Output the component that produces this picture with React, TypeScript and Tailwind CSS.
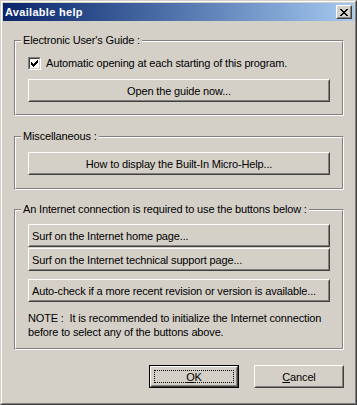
import React from 'react';

const font = "font-['Liberation_Sans',Arial,sans-serif]";

interface BtnProps {
  children: React.ReactNode;
  className?: string;
  align?: 'center' | 'left';
}

const Btn: React.FC<BtnProps> = ({ children, className = '', align = 'center' }) => (
  <div className={`h-[23px] border border-t-white border-l-white border-r-[#404040] border-b-[#404040] ${className}`}>
    <div
      className={`h-full flex items-center border border-t-[#d4d0c8] border-l-[#d4d0c8] border-r-[#808080] border-b-[#808080] leading-[14px] ${
        align === 'center' ? 'justify-center' : 'justify-start pl-[2px]'
      }`}
    >
      {children}
    </div>
  </div>
);

interface GroupProps {
  label: string;
  children: React.ReactNode;
  className?: string;
}

const Group: React.FC<GroupProps> = ({ label, children, className = '' }) => (
  <div className={`relative border border-t-[#808080] border-l-[#808080] border-r-white border-b-white ${className}`}>
    <span className="absolute left-[6px] top-[-8px] px-[2px] bg-[#d4d0c8] leading-[14px] whitespace-nowrap">
      {label}
    </span>
    <div className="border border-t-white border-l-white border-r-[#808080] border-b-[#808080] px-[12px]">
      {children}
    </div>
  </div>
);

const App: React.FC = () => {
  return (
    <div className={`w-[357px] h-[405px] bg-[#d4d0c8] text-[11px] tracking-[-0.15px] text-black ${font} border border-t-[#d4d0c8] border-l-[#d4d0c8] border-r-[#404040] border-b-[#404040]`}>
      <div className="h-full flex flex-col p-px border border-t-white border-l-white border-r-[#808080] border-b-[#808080]">
        {/* title bar */}
        <div className="h-[18px] flex items-center bg-gradient-to-r from-[#0a246a] to-[#a6caf0] pl-[2px] pr-[2px]">
          <span className="flex-1 text-white font-bold tracking-[0.3px] leading-[18px] whitespace-nowrap">Available help</span>
          <div className="w-[16px] h-[14px] border border-t-white border-l-white border-r-[#404040] border-b-[#404040] bg-[#d4d0c8]">
            <div className="h-full flex items-center justify-center border border-t-[#d4d0c8] border-l-[#d4d0c8] border-r-[#808080] border-b-[#808080]">
              <svg width="8" height="7" viewBox="0 0 8 7" shapeRendering="crispEdges">
                <path d="M0 0h2v1h-2zM6 0h2v1h-2zM1 1h2v1h-2zM5 1h2v1h-2zM2 2h4v1h-4zM3 3h2v1h-2zM2 4h4v1h-4zM1 5h2v1h-2zM5 5h2v1h-2zM0 6h2v1h-2zM6 6h2v1h-2z" fill="#000" />
              </svg>
            </div>
          </div>
        </div>

        {/* client area */}
        <div className="flex flex-col pl-[11px] pr-[10px]">
          <Group label="Electronic User's Guide :" className="mt-[19px]">
            <div className="pt-[15px] pb-[12px] flex flex-col">
              <div className="h-[13px] flex items-center gap-[5px]">
                <div className="w-[13px] h-[13px] border border-t-[#808080] border-l-[#808080] border-r-white border-b-white">
                  <div className="w-full h-full bg-white border border-t-[#404040] border-l-[#404040] border-r-[#d4d0c8] border-b-[#d4d0c8] flex items-center justify-center">
                    <svg width="7" height="7" viewBox="0 0 7 7" shapeRendering="crispEdges">
                      <path d="M6 0h1v3h-1zM5 1h1v3h-1zM4 2h1v3h-1zM3 3h1v3h-1zM2 4h1v3h-1zM1 3h1v3h-1zM0 2h1v3h-1z" fill="#000" />
                    </svg>
                  </div>
                </div>
                <span className="leading-[14px] -mt-[1px] whitespace-nowrap">Automatic opening at each starting of this program.</span>
              </div>
              <Btn className="mt-[9px]">Open the guide now...</Btn>
            </div>
          </Group>

          <Group label="Miscellaneous :" className="mt-[20px]">
            <div className="pt-[14px] pb-[13px]">
              <Btn>How to display the Built-In Micro-Help...</Btn>
            </div>
          </Group>

          <Group label="An Internet connection is required to use the buttons below :" className="mt-[19px]">
            <div className="pt-[13px] pb-[9px] flex flex-col">
              <Btn align="left">Surf on the Internet home page...</Btn>
              <Btn align="left" className="mt-px">Surf on the Internet technical support page...</Btn>
              <Btn align="left" className="mt-[8px]">Auto-check if a more recent revision or version is available...</Btn>
              <p className="mt-[9px] leading-[14px] whitespace-pre">
                {'NOTE :  It is recommended to initialize the Internet connection\nbefore to select any of the buttons above.'}
              </p>
            </div>
          </Group>

          <div className="mt-[15px] flex justify-end gap-[15px]">
            <div className="w-[90px] h-[23px] border border-black">
              <div className="h-full border border-t-white border-l-white border-r-[#404040] border-b-[#404040]">
                <div className="h-full p-[2px] border border-t-[#d4d0c8] border-l-[#d4d0c8] border-r-[#808080] border-b-[#808080]">
                  <div className="h-full flex items-center justify-center border border-dotted border-black leading-[14px]">
                    <span><u>O</u>K</span>
                  </div>
                </div>
              </div>
            </div>
            <Btn className="w-[90px]">
              <span><u>C</u>ancel</span>
            </Btn>
          </div>
        </div>
      </div>
    </div>
  );
};

export default App;
